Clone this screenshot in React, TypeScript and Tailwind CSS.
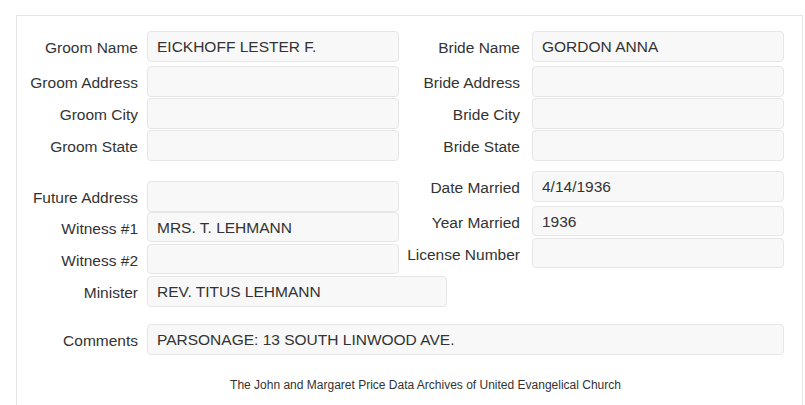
// Marriage record detail form

import React from "react";

type FieldProps = {
  label: string;
  value?: string;
  className?: string;
  inputWidth?: string;
  labelWidth?: string;
  gap?: string;
  inputHeight?: string;
};

const Field: React.FC<FieldProps> = ({
  label,
  value = "",
  className = "",
  inputWidth = "w-[252px]",
  labelWidth = "w-[121px]",
  gap = "ml-[9px]",
  inputHeight = "h-[31px]",
}) => {
  return (
    <div className={`flex items-center ${className}`}>
      <div className={`${labelWidth} shrink-0 pt-[3px] text-right`}>{label}</div>
      <div
        className={`${inputWidth} ${gap} ${inputHeight} shrink-0 rounded-[4px] border border-[#e6e6e6] bg-[#f8f8f8] px-[9px] flex items-center pt-[1px]`}
      >
        {value}
      </div>
    </div>
  );
};

const App: React.FC = () => {
  return (
    <div className="w-[805px] h-[405px] overflow-hidden bg-white pl-[16px] pt-[15px] font-['Liberation_Sans',Arial,sans-serif] text-[15.5px] text-[#333]">
      <div className="w-[787px] h-[400px] border-l border-t border-r border-[#e5e5e5]">
        <div className="flex items-start pt-[15px]">
          {/* Left column */}
          <div className="w-[383px] shrink-0">
            <Field label="Groom Name" value="EICKHOFF LESTER F." />
            <Field label="Groom Address" className="mt-[4px]" />
            <Field label="Groom City" className="mt-[1px]" />
            <Field label="Groom State" className="mt-[1px]" />
            <Field label="Future Address" className="mt-[20px]" />
            <Field label="Witness #1" value="MRS. T. LEHMANN" inputHeight="h-[30px]" />
            <Field label="Witness #2" className="mt-[2px]" inputHeight="h-[30px]" />
            <Field
              label="Minister"
              value="REV. TITUS LEHMANN"
              className="mt-[2px]"
              inputWidth="w-[300px]"
            />
          </div>

          {/* Right column */}
          <div className="shrink-0">
            <Field label="Bride Name" value="GORDON ANNA" labelWidth="w-[120px]" gap="ml-[12px]" />
            <Field label="Bride Address" className="mt-[4px]" labelWidth="w-[120px]" gap="ml-[12px]" />
            <Field label="Bride City" className="mt-[1px]" labelWidth="w-[120px]" gap="ml-[12px]" />
            <Field label="Bride State" className="mt-[1px]" labelWidth="w-[120px]" gap="ml-[12px]" />
            <Field
              label="Date Married"
              value="4/14/1936"
              className="mt-[10px]"
              labelWidth="w-[120px]"
              gap="ml-[12px]"
            />
            <Field
              label="Year Married"
              value="1936"
              className="mt-[4px]"
              labelWidth="w-[120px]"
              gap="ml-[12px]"
              inputHeight="h-[30px]"
            />
            <Field
              label="License Number"
              className="mt-[2px]"
              labelWidth="w-[120px]"
              gap="ml-[12px]"
              inputHeight="h-[30px]"
            />
          </div>
        </div>

        <Field
          label="Comments"
          value="PARSONAGE: 13 SOUTH LINWOOD AVE."
          className="mt-[17px]"
          inputWidth="w-[637px]"
        />

        <div className="mt-[21px] pl-[32px] text-center text-[12px]">
          The John and Margaret Price Data Archives of United Evangelical Church
        </div>
      </div>
    </div>
  );
};

export default App;
